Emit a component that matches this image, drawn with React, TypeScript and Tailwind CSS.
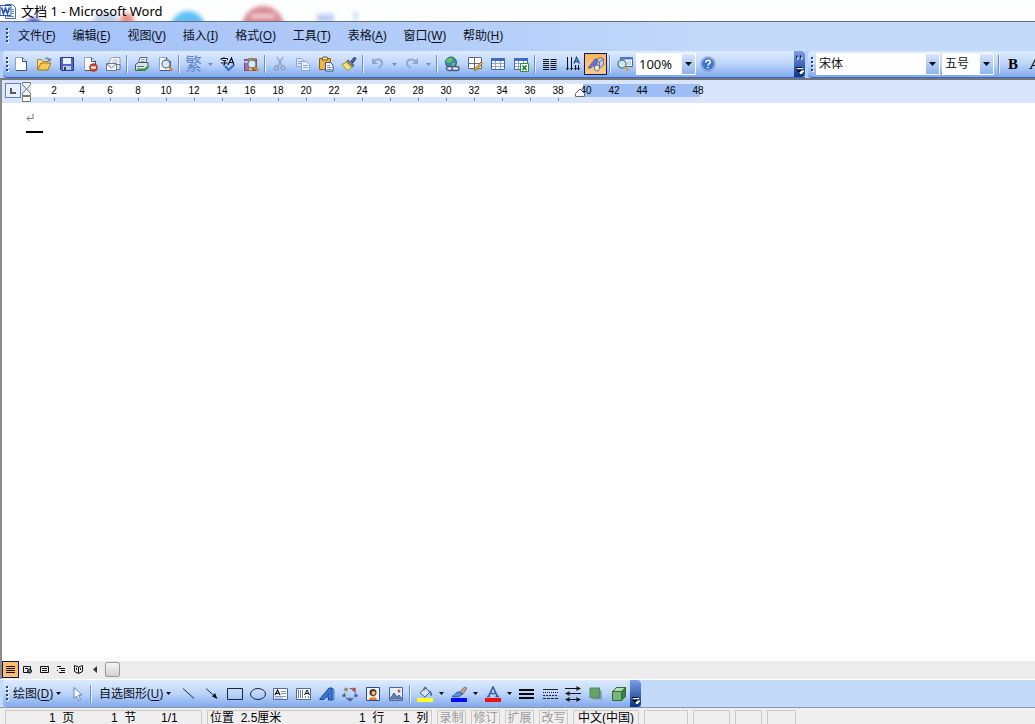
import React from "react";

type Draw = { name: string; art: React.ReactNode; active?: boolean };

const Svg = ({ children, w = 16, h = 16 }: { children: React.ReactNode; w?: number; h?: number }) => (
  <svg width={w} height={h} viewBox={`0 0 ${w} ${h}`} fill="none" aria-hidden="true" className="shrink-0">
    {children}
  </svg>
);

const pageShape = (
  <>
    <path d="M2.500 1.500h7l4 4v9h-11z" fill="#fdfeff" stroke="#8ea3cc" />
    <path d="M9.500 1.500v4h4M13.500 5v9.500H3" stroke="#3f5484" />
  </>
);

const lens = (
  <>
    <circle cx="9" cy="8" r="4" fill="#d5ebf8" stroke="#6b7f92" strokeWidth="1.300" />
    <path d="M12 11l3 3.500" stroke="#c98b2c" strokeWidth="2.600" />
  </>
);

const gridShape = (
  <>
    <path d="M1.500 2.500h13v11h-13z" fill="#fff" stroke="#4067b0" />
    <path d="M1 2h14v3H1z" fill="#3f6cc4" />
    <path d="M2 7.500h12M2 10.500h12M5.500 5v8M10.500 5v8" stroke="#8ba6d6" />
  </>
);

const fileTools: Draw[] = [
  { name: "新建", art: pageShape },
  {
    name: "打开",
    art: (
      <>
        <path d="M1.500 13.500v-10h4l1.500 2h5v2" fill="#f9dc85" stroke="#a8822c" />
        <path d="M1.500 14l3.500-7h10l-3 7z" fill="#fbc94e" stroke="#9d7420" />
        <path d="M9 3c2-2 4-1 4.500 1.500M11.500 3.500l2 1.500 1.500-2.500" stroke="#35559b" />
      </>
    ),
  },
  {
    name: "保存",
    art: (
      <>
        <path d="M1.500 1.500h13v13h-12l-1-1z" fill="#5366c8" stroke="#29328d" />
        <path d="M4 2h8v6H4z" fill="#e9f0ff" />
        <path d="M4 10h8v4H4z" fill="#c5c9dc" />
        <path d="M5 11h2v3H5z" fill="#29328d" />
      </>
    ),
  },
  {
    name: "权限",
    art: (
      <>
        {pageShape}
        <circle cx="11.500" cy="11.500" r="3.800" fill="#d84b2d" stroke="#a42d17" />
        <path d="M9 11.500h5" stroke="#fff" strokeWidth="2" />
      </>
    ),
  },
  {
    name: "电子邮件",
    art: (
      <>
        <path d="M4.500 8c0-5 2-6.500 4-6.500h6.500V12" fill="#fff" stroke="#8b95ac" />
        <path d="M8 4h5M7 6h6" stroke="#a9b6d0" />
        <path d="M1.500 7.500h10v7h-10z" fill="#f3f6fb" stroke="#6c7897" />
        <path d="M2 8l4.500 4L11 8" stroke="#6c7897" />
        <path d="M12 8.500h3v5h-3" fill="#dde5f2" stroke="#6c7897" />
      </>
    ),
  },
];

const printTools: Draw[] = [
  {
    name: "打印",
    art: (
      <>
        <path d="M4 8l2-6.500h7L11.500 8z" fill="#fff" stroke="#5a6785" />
        <path d="M7 3.500h4M6.500 5.500h4" stroke="#91a0be" />
        <path d="M1.500 8.500l3-2h9.500v5l-3 3H1.500z" fill="#dce3e8" stroke="#46545f" />
        <path d="M3 13.500h8l3-3" stroke="#3c9b39" strokeWidth="2" />
        <path d="M3 10.500h7" stroke="#63717c" />
      </>
    ),
  },
  { name: "打印预览", art: <>{pageShape}{lens}</> },
];

const spellTools: Draw[] = [
  {
    name: "拼写和语法",
    art: (
      <>
        <path d="M1 4V2.500h6.500V4M4 1v1M2.500 4.500h3.500L4.500 6v3H3M1 7h6.500" stroke="#111" />
        <path d="M8 9l3.500-7L14 9M9 6.500h4" stroke="#111" strokeWidth="1.200" />
        <path d="M5 10l3.500 4L14 9" stroke="#3a70c2" strokeWidth="2.200" />
      </>
    ),
  },
  {
    name: "信息检索",
    art: (
      <>
        <path d="M1.500 3.500h4v11h-4z" fill="#a96cc0" stroke="#71448b" />
        <path d="M5.500 2.500h4v12h-4z" fill="#edcc61" stroke="#96762a" />
        <path d="M10 3h3.500v11.500H10z" fill="#cf6d55" stroke="#944331" />
        <path d="M1 6h4M6 5h3" stroke="#fff" />
        {lens}
      </>
    ),
  },
];

const clipTools: Draw[] = [
  {
    name: "剪切",
    art: (
      <>
        <path d="M5 1l5 9M11 1L6 10" stroke="#8fa2c4" strokeWidth="1.500" />
        <circle cx="4.500" cy="12" r="2" stroke="#8fa2c4" strokeWidth="1.500" />
        <circle cx="11" cy="12" r="2" stroke="#8fa2c4" strokeWidth="1.500" />
      </>
    ),
  },
  {
    name: "复制",
    art: (
      <>
        <path d="M1.500 2.500h5l3 3v5h-8z" fill="#dbe6f7" stroke="#92a6cb" />
        <path d="M6.500 5.500h5l3 3v6h-8z" fill="#e5eefb" stroke="#92a6cb" />
        <path d="M8 9.500h5M8 11.500h5M3 5.500h3M3 7.500h3" stroke="#92a6cb" />
      </>
    ),
  },
  {
    name: "粘贴",
    art: (
      <>
        <path d="M1.500 2.500h11v11h-11z" fill="#f2b63e" stroke="#8d6114" />
        <path d="M4 4l1-3h4l1 3z" fill="#f5e6a6" stroke="#755d26" />
        <path d="M7.500 6.500h5l2.500 2.500v6H7.500z" fill="#fff" stroke="#384f84" />
        <path d="M9 9.500h3M9 11.500h4.500M9 13.500h4.500" stroke="#6f8cc4" />
      </>
    ),
  },
  {
    name: "格式刷",
    art: (
      <>
        <path d="M10 5l3.500-4 1.500 1.500L12 7z" fill="#50679d" stroke="#2d3f6d" />
        <path d="M7 4l6 5-1.500 2-6-5z" fill="#76839b" stroke="#48546e" />
        <path d="M5.500 6L1 8.500l6 6L11 11z" fill="#f4dc66" stroke="#a98a22" />
        <path d="M3 9l5 4" stroke="#fff6b4" />
      </>
    ),
  },
];

const tableTools: Draw[] = [
  {
    name: "插入超链接",
    art: (
      <>
        <circle cx="7" cy="6.500" r="5.500" fill="#3e82c4" stroke="#285d8d" />
        <path d="M3 3l3-1.500 3 1-1 3-3 1.500-3-1zM7 8l3-2 1.500 2L9 11z" fill="#5fc659" />
        <rect x="2.500" y="10.500" width="7" height="4" rx="2" fill="#d6e2f5" stroke="#47597b" strokeWidth="1.300" />
        <rect x="8" y="10.500" width="7" height="4" rx="2" fill="#d6e2f5" stroke="#47597b" strokeWidth="1.300" />
      </>
    ),
  },
  {
    name: "表格和边框",
    art: (
      <>
        <path d="M1.500 1.500h13v11h-13zM7.500 2v10M2 7.500h12" fill="#fff" stroke="#5c6a86" />
        <path d="M14 6l1.500 1.500-6 6.500-2 .500.500-2z" fill="#eeb84b" stroke="#9b6a22" />
      </>
    ),
  },
  { name: "插入表格", art: gridShape },
  {
    name: "插入 Excel 工作表",
    art: (
      <>
        {gridShape}
        <path d="M7.500 7.500h8v8h-8z" fill="#f2fff0" stroke="#2f8b39" />
        <path d="M9.500 9.500l4 4.500M13.500 9.500l-4 4.500" stroke="#1d7a2b" strokeWidth="1.600" />
      </>
    ),
  },
];

const layoutTools: Draw[] = [
  {
    name: "分栏",
    art: <path d="M1 3.500h6M1 5.500h6M1 7.500h6M1 9.500h6M1 11.500h6M1 13.500h6M8.500 3.500h6M8.500 5.500h6M8.500 7.500h6M8.500 9.500h6M8.500 11.500h6M8.500 13.500h6" stroke="#111" />,
  },
  {
    name: "更改文字方向",
    art: (
      <>
        <path d="M2.500 1v12M6.500 1v12M10.500 9v4M13.500 9v4" stroke="#111" />
        <path d="M1 12l1.500 2.500L4 12zM5 12l1.500 2.500L8 12zM9 12l1.500 2.500L12 12zM12 12l1.500 2.500L15 12z" fill="#111" />
        <path d="M9 7.500l2.500-6 3 6M10 5.500h3.500" stroke="#26508f" strokeWidth="1.400" />
      </>
    ),
  },
  {
    name: "绘图",
    active: true,
    art: (
      <>
        <path d="M8 4.500l4-3 3.500 1.500v6l-4 3-3.500-2z" fill="#c9ccd6" stroke="#68728d" />
        <path d="M8 4.500l3.500 1.500 4-3M11.500 6v6" stroke="#68728d" />
        <path d="M0 12L7 3h2v9H6.500v-2H4.500L3 12zM5.500 8.500h1.500V6.500z" fill="#7679cf" stroke="#4a4fa5" strokeWidth=".800" />
        <ellipse cx="9" cy="12" rx="2.500" ry="3" fill="#e9edf4" stroke="#68728d" />
      </>
    ),
  },
];

const shapeTools: Draw[] = [
  { name: "直线", art: <path d="M2 2.500l11 10" stroke="#1d2633" /> },
  { name: "箭头", art: <><path d="M2 2.500l9 8" stroke="#1d2633" /><path d="M13.500 13l-5.500-2.500 3-3.500z" fill="#111" /></> },
  { name: "矩形", art: <path d="M.500 2.500h15v11H.500z" stroke="#1d2633" /> },
  { name: "椭圆", art: <ellipse cx="8" cy="8" rx="7.500" ry="5.500" stroke="#1d2633" /> },
  {
    name: "文本框",
    art: (
      <>
        <path d="M.500 2.500h14v11H.500z" fill="#f7fbff" stroke="#53699a" />
        <path d="M2 9l2.500-5L7 9M3 7.500h3" stroke="#111" strokeWidth="1.200" />
        <path d="M8 5.500h5M8 7.500h5M2 10.500h11M2 12h8" stroke="#879cbf" />
      </>
    ),
  },
  {
    name: "竖排文本框",
    art: (
      <>
        <path d="M.500 2.500h14v11H.500z" fill="#f7fbff" stroke="#53699a" />
        <path d="M8.500 9l2.500-5 2.500 5M9.500 7.500h3" stroke="#111" />
        <path d="M2.500 4v8M4.500 4v8M6.500 4v8M9.500 10v2M12.500 10v2" stroke="#76849f" />
      </>
    ),
  },
  {
    name: "艺术字",
    art: (
      <>
        <path d="M12.500 2L15 3.500v10.500h-2z" fill="#86b4f0" stroke="#3f74c8" />
        <path d="M.500 13.500L10 2h3v12H9.500v-3H7l-2 2.500zM8.500 9h1V7.500z" fill="#3b78d8" stroke="#1d469c" />
      </>
    ),
  },
  {
    name: "图示",
    art: (
      <>
        <circle cx="8" cy="8" r="5.500" stroke="#35486f" strokeDasharray="3 2" />
        <circle cx="4" cy="3.500" r="2" fill="#a58b6b" />
        <circle cx="12" cy="3.500" r="2" fill="#b3564a" />
        <circle cx="14" cy="9.500" r="1.800" fill="#4f6aa5" />
        <circle cx="8" cy="13.500" r="2" fill="#5b5fae" />
        <circle cx="2" cy="9.500" r="1.800" fill="#4e7a6c" />
      </>
    ),
  },
  {
    name: "插入剪贴画",
    art: (
      <>
        <path d="M1.500 1.500h13v13h-13z" fill="#f1f5fc" stroke="#2d4b87" />
        <path d="M4 14c0-4 8-4 8 0z" fill="#d8752d" />
        <circle cx="8" cy="6.500" r="3.500" fill="#473328" />
        <circle cx="8.500" cy="7" r="2" fill="#f3c27a" />
        <path d="M6 11l3-1 2 2-3 1z" fill="#efb23e" />
      </>
    ),
  },
  {
    name: "插入图片",
    art: (
      <>
        <path d="M1.500 1.500h13v13h-13z" fill="#e2edfb" stroke="#4a6498" />
        <circle cx="11" cy="5" r="1.500" fill="#d6532e" />
        <path d="M2 13l4-6 3 4 2-2 3 4z" fill="#6582bd" stroke="#435b90" />
      </>
    ),
  },
];

const fillArt = (
  <>
    <path d="M3 7l5-5 5 4-5 5z" fill="#dbe4ee" stroke="#4b607f" />
    <path d="M7 5V1.500c1.500-1 2.500 0 2.500 1.500" stroke="#4b607f" />
    <path d="M12 5c2 0 3 2 2.500 5-1-1-1-3-2.500-4z" fill="#417bc2" stroke="#417bc2" />
    <path d="M0 12h16v4H0z" fill="#ffff1f" />
  </>
);
const lineColorArt = (
  <>
    <path d="M8 7l5.500-6L16 2.500 11 9z" fill="#c8a568" stroke="#58719d" />
    <path d="M11 7.500c-1 3.500-5 4-10 3 3-1 4-5 7-4.500z" fill="#5c92dd" stroke="#2c529a" />
    <path d="M0 12h16v4H0z" fill="#0a0af2" />
  </>
);
const fontColorArt = (
  <>
    <path d="M3.500 10.500L8 1l4.500 9.500M5 7.500h6M2 10.500h3M10.500 10.500H14" stroke="#3b5f9e" strokeWidth="1.700" />
    <path d="M0 12h16v4H0z" fill="#ef1010" />
  </>
);

const effectTools: Draw[] = [
  { name: "线型", art: <path d="M0 3.500h15" stroke="#080808" /> && <path d="M0 4h15M0 8h15M0 12h15" stroke="#080808" strokeWidth="2" /> },
  {
    name: "虚线线型",
    art: (
      <>
        <path d="M1 3.500h15" stroke="#222" />
        <path d="M1 6.500h15" stroke="#222" strokeDasharray="1 1" />
        <path d="M1 9.500h15" stroke="#222" strokeDasharray="2 1" />
        <path d="M1 12.500h15" stroke="#222" strokeDasharray="3 1" />
      </>
    ),
  },
  {
    name: "箭头样式",
    art: (
      <>
        <path d="M0 2.500h13M2 7.500h14M2 13.500h12" stroke="#111" />
        <path d="M11 0l5 2.500L11 5l1-2.500zM5 5L0 7.500 5 10 4 7.500zM5 11l-5 2.500L5 16l-1-2.500zM11 11l5 2.500-5 2.500 1-2.500z" fill="#111" />
      </>
    ),
  },
  { name: "阴影样式", art: <><path d="M4.500 4.500h9v9h-9z" fill="#7d8ea6" /><path d="M2 2h9.500v9.500H2z" fill="#62a568" stroke="#4b8d56" /></> },
  {
    name: "三维效果样式",
    art: (
      <>
        <path d="M1.500 5.500l4-4h9v9l-4 4h-9z" fill="#78b978" stroke="#34673c" />
        <path d="M10.500 5.500h-9l4-4h9z" fill="#b3dcae" stroke="#34673c" />
        <path d="M10.500 5.500l4-4v9l-4 4z" fill="#3f7f4c" stroke="#34673c" />
      </>
    ),
  },
];

const Tool = ({ name, art, active }: Draw) => (
  <button
    type="button"
    aria-label={name}
    className={
      active
        ? "flex h-[22px] w-[23px] shrink-0 items-center justify-center border border-[#0b1a66] bg-linear-to-b from-[#fbb45f] to-[#fdc988]"
        : "flex h-[22px] w-[23px] shrink-0 items-center justify-center"
    }
  >
    <Svg>{art}</Svg>
  </button>
);

const Tools = ({ list }: { list: Draw[] }) => (
  <>
    {list.map((t) => (
      <Tool key={t.name} {...t} />
    ))}
  </>
);

const Caret = ({ faded }: { faded?: boolean }) => (
  <svg width="5" height="3" viewBox="0 0 5 3" aria-hidden="true" className="shrink-0">
    <path d="M0 0h5L2.500 3z" fill={faded ? "#7488ad" : "#0a0a14"} />
  </svg>
);

const Drop = ({ name, faded }: { name: string; faded?: boolean }) => (
  <button type="button" aria-label={name} className="flex h-[22px] w-[11px] shrink-0 items-center justify-center">
    <Caret faded={faded} />
  </button>
);

const Sep = () => (
  <div className="flex h-[18px] w-[6px] shrink-0 justify-center">
    <div className="w-px bg-[#6a8ccb]" />
    <div className="w-px bg-[#eaf2ff]" />
  </div>
);

const Grip = () => (
  <svg width="3" height="15" viewBox="0 0 3 15" aria-hidden="true" className="shrink-0">
    {[0, 4, 8, 12].map((y) => (
      <g key={y}>
        <rect x="1" y={y + 1} width="2" height="2" fill="#fff" />
        <rect x="0" y={y} width="2" height="2" fill="#27418d" />
      </g>
    ))}
  </svg>
);

const Combo = ({ label, value, box, face }: { label: string; value: string; box: string; face: string }) => (
  <div className={`relative flex h-[22px] shrink-0 ${box}`}>
    <select aria-label={label} className={`w-full appearance-none bg-white pl-[3px] leading-[20px] text-[#111] outline-none ${face}`}>
      <option>{value}</option>
    </select>
    <span className="pointer-events-none absolute inset-y-px right-px flex w-[13px] items-center justify-center bg-linear-to-b from-[#d7e6fc] to-[#8fb3ec]">
      <svg width="7" height="4" viewBox="0 0 7 4" aria-hidden="true">
        <path d="M0 0h7L3.500 4z" fill="#0a0a14" />
      </svg>
    </span>
  </div>
);

const Overflow = ({ chevrons }: { chevrons?: boolean }) => (
  <button
    type="button"
    aria-label="工具栏选项"
    className="flex w-[11px] shrink-0 items-end justify-center self-stretch rounded-r-sm bg-linear-to-b from-[#7ba0e8] to-[#0b338c] pb-[2px]"
  >
    <svg width="9" height="22" viewBox="0 0 9 22" fill="none" aria-hidden="true">
      {chevrons && (
        <>
          <path d="M2 3l2 2-2 2zM6 3l2 2-2 2z" fill="#fff" />
          <path d="M1 2l2 2-2 2zM5 2l2 2-2 2z" fill="#14255a" />
        </>
      )}
      <path d="M2 15.500h6M3 18h6l-3 3z" fill="#fff" stroke="#fff" />
      <path d="M1 14.500h6" stroke="#0a0a14" />
      <path d="M1 17h6l-3 3z" fill="#0a0a14" />
    </svg>
  </button>
);

const menus = [
  ["文件", "F"], ["编辑", "E"], ["视图", "V"], ["插入", "I"], ["格式", "O"],
  ["工具", "T"], ["表格", "A"], ["窗口", "W"], ["帮助", "H"],
];

const views: { name: string; art: React.ReactNode }[] = [
  { name: "普通视图", art: <path d="M0 1.500h9M0 3.500h9M0 5.500h9M0 7.500h9" stroke="#111" /> },
  { name: "Web 版式视图", art: <><path d="M.500 1.500h7v6h-7zM2 3.500h3" stroke="#111" /><circle cx="6.500" cy="6" r="2" fill="#4d8292" stroke="#111" /></> },
  { name: "页面视图", art: <path d="M.500 1.500h8v6h-8zM2 3.500h5M2 5.500h5" stroke="#111" /> },
  { name: "大纲视图", art: <path d="M0 1.500h4M2 3.500h6M4 5.500h4M2 7.500h6M0 5.500h1" stroke="#111" /> },
  { name: "阅读版式", art: <path d="M.500 .500l4 1.500 4-1.500v6l-4 2-4-2zM4.500 2v6M2.500 3v2M6.500 3v2" stroke="#111" /> },
];

const rulerMarks = Array.from({ length: 24 }, (_, i) => (i + 1) * 2);

const Cell = ({ children, box }: { children?: React.ReactNode; box: string }) => (
  <div className={`flex h-[16px] shrink-0 items-center border border-[#cfcac8] leading-[14px] whitespace-pre ${box}`}>{children}</div>
);

export default function App() {
  return (
    <div className="flex h-screen flex-col overflow-hidden bg-white font-['Noto_Sans','Noto_Sans_CJK_SC',sans-serif] text-[12px] text-[#0b1020]">
      <header className="relative flex h-[22px] shrink-0 items-center gap-[5px] overflow-hidden border-b border-[#65707f] bg-[#fdfefe]">
        <svg width="370" height="21" viewBox="0 0 370 21" aria-hidden="true" className="pointer-events-none absolute bottom-0 left-[20px]">
          <defs>
            <filter id="soft" x="-50%" y="-50%" width="200%" height="200%">
              <feGaussianBlur stdDeviation="2" />
            </filter>
          </defs>
          <g filter="url(#soft)">
            <circle cx="14" cy="26" r="8" fill="#3c47c8" />
            <circle cx="86" cy="26" r="14" fill="#c3d3e6" />
            <circle cx="107" cy="20" r="7" fill="#ea8f88" />
            <circle cx="168" cy="28" r="17" fill="#5fc1f5" />
            <circle cx="243" cy="27" r="21" fill="#d98a94" />
            <path d="M231 16h24" stroke="#f6e3e6" strokeWidth="3" />
            <path d="M297 14h17v8h-17z" fill="#b9cdf3" />
            <path d="M333 12h5v8h-5z" fill="#cfe2f8" />
          </g>
        </svg>
        <svg width="16" height="16" viewBox="0 0 16 16" fill="none" aria-hidden="true" className="relative shrink-0">
          <path d="M5.500 1.500h7l3 3v11h-10z" fill="#fff" stroke="#4a6ba8" />
          <path d="M12 6.500h2M12 8.500h2M12 10.500h2M7 13.500h7" stroke="#5c87d6" />
          <path d="M0 2.500h11v10H0z" fill="#e9f1ff" stroke="#2d53a5" />
          <path d="M1.500 4.500l2 6 2-5 2 5 2-6" stroke="#2450a8" strokeWidth="1.600" />
        </svg>
        <h1 className="relative text-[13px] leading-[20px] text-black">文档 1 - Microsoft Word</h1>
      </header>

      <nav aria-label="菜单栏" className="flex h-[29px] shrink-0 items-center bg-linear-to-r from-[#a2c0f7] via-[#b7d0f9] via-50% to-[#c4dafa] to-70% pb-[2px] pl-[6px]">
        <Grip />
        <div className="ml-[9px] flex gap-[17px]">
          {menus.map(([text, key]) => (
            <button key={key} type="button" className="whitespace-nowrap leading-[20px]">
              {text}(<span className="underline underline-offset-2">{key}</span>)
            </button>
          ))}
        </div>
      </nav>

      <div className="flex h-[27px] shrink-0 overflow-hidden bg-[#b7d0f9] pl-[3px]">
        <div role="toolbar" aria-label="常用" className="flex w-[802px] shrink-0 items-center rounded-l-sm border-b border-[#3d68b8] bg-linear-to-b from-[#deebfe] via-[#bcd5fa] to-[#80a9ec] pl-[3px]">
          <Grip />
          <Tools list={fileTools} />
          <Sep />
          <Tools list={printTools} />
          <Sep />
          <button type="button" className="flex h-[22px] w-[23px] shrink-0 items-center justify-center text-[17px] leading-[20px] text-[#5f87cc]">繁</button>
          <Drop name="中文简繁转换" faded />
          <Tools list={spellTools} />
          <Sep />
          <Tools list={clipTools} />
          <Sep />
          <Tool name="撤消" art={<><path d="M3 6c3-4 9-3 9 1 0 3-2 4-4 5" stroke="#8fa6d0" strokeWidth="1.800" /><path d="M2 2v6h6z" fill="#8fa6d0" /></>} />
          <Drop name="撤消列表" faded />
          <Tool name="恢复" art={<><path d="M12 6C9 2 3 3 3 7c0 3 2 4 4 5" stroke="#8fa6d0" strokeWidth="1.800" /><path d="M14 2v6H8z" fill="#8fa6d0" /></>} />
          <Drop name="恢复列表" faded />
          <Sep />
          <Tools list={tableTools} />
          <Sep />
          <Tools list={layoutTools} />
          <Sep />
          <Tool
            name="文档结构图"
            art={
              <>
                <path d="M3.500 1.500h12v9h-12z" fill="#fff" stroke="#3f68b8" />
                <path d="M3 1h13v2.500H3z" fill="#4876c9" />
                <path d="M10 6h4M10 8h4" stroke="#8ba6d6" />
                <circle cx="5" cy="8" r="4" fill="#cdeaf0" stroke="#5f7690" strokeWidth="1.300" />
                <path d="M8 11l3 3.500" stroke="#c7a23a" strokeWidth="2.400" />
              </>
            }
          />
          <Combo label="显示比例" value="100%" box="w-[60px]" face="text-[13px]" />
          <Tool
            name="帮助"
            art={
              <>
                <circle cx="8" cy="8" r="6.500" fill="#3e74d0" stroke="#e6effc" />
                <circle cx="8" cy="8" r="7" stroke="#4c73bd" strokeWidth=".800" />
                <path d="M5.800 6.500c0-3 4.500-3 4.500-.300 0 1.500-2.200 1.500-2.200 3.300M8 10.800v1.500" stroke="#fff" strokeWidth="1.500" />
              </>
            }
          />
          <div className="flex-1" />
          <Overflow chevrons />
        </div>
        <div role="toolbar" aria-label="格式" className="ml-[3px] flex min-w-0 flex-1 items-center overflow-hidden rounded-l-sm border-b border-[#3d68b8] bg-linear-to-b from-[#deebfe] via-[#bcd5fa] to-[#80a9ec] pl-[3px]">
          <Grip />
          <div className="ml-[2px] flex shrink-0 items-center gap-[2px]">
            <Combo label="字体" value="宋体" box="w-[124px]" face="text-[12px]" />
            <Combo label="字号" value="五号" box="w-[52px]" face="text-[12px]" />
            <Sep />
          </div>
          <button type="button" aria-label="加粗" className="w-[22px] shrink-0 font-['Liberation_Serif',serif] text-[15px] font-black text-black">B</button>
          <button type="button" aria-label="倾斜" className="w-[22px] shrink-0 font-['Liberation_Serif',serif] text-[15px] font-bold text-black italic">A</button>
        </div>
      </div>

      <main className="flex min-h-0 flex-1 flex-col border-t-2 border-l-2 border-t-[#70757e] border-l-[#8a8a8a]">
        <div className="flex h-[23px] shrink-0 bg-[#d8e5fc] pl-[3px]">
          <button type="button" aria-label="制表符" className="mt-[3px] flex h-[15px] w-[16px] shrink-0 items-center justify-center border border-[#5a83cc] bg-[#e7effc]">
            <svg width="7" height="7" viewBox="0 0 7 7" aria-hidden="true">
              <path d="M1 1v5h5" fill="none" stroke="#5a5a5a" strokeWidth="2" />
            </svg>
          </button>
          <svg width="10" height="22" viewBox="0 0 10 22" fill="none" stroke="#777" aria-hidden="true" className="mt-px shrink-0">
            <path d="M1.500 1.500h8v2l-4 4.500-4-4.500zM5.500 8l4 4.500v2h-8v-2zM1.500 15.500h8v5h-8z" fill="#fdfdf6" />
          </svg>
          <div className="flex flex-1 flex-col pt-[4px]">
            <ol className="flex h-[13px] bg-[linear-gradient(90deg,#fff_0,#fff_552px,#9dbdf5_552px,#9dbdf5_669px,transparent_669px)] pl-[9px]">
              {rulerMarks.map((n) => (
                <li key={n} className="w-[28px] shrink-0 text-center font-['Liberation_Sans',sans-serif] text-[10px] leading-[13px] text-black">
                  {n}
                </li>
              ))}
            </ol>
            <div className="flex pl-[9px]">
              {rulerMarks.slice(0, 19).map((n) => (
                <span key={n} className="flex h-[4px] w-[28px] shrink-0 justify-center pt-px">
                  <span className="w-px bg-[#7d8794]" />
                </span>
              ))}
              <svg width="10" height="9" viewBox="0 0 10 9" aria-hidden="true" className="-mt-[9px] ml-[3px]">
                <path d="M.500 8.500v-3L5 1l4.500 4.500v3z" fill="#fff" stroke="#666" />
              </svg>
            </div>
          </div>
        </div>
        <div role="textbox" aria-label="文档内容" className="flex min-h-0 flex-1 flex-col items-start pt-[10px] pl-[24px]">
          <svg width="8" height="9" viewBox="0 0 8 9" fill="none" aria-hidden="true">
            <path d="M7 .500v5H1M3.500 3L1 5.500 3.500 8" stroke="#7c7c7c" />
          </svg>
          <div className="mt-[9px] h-[2px] w-[17px] bg-black" />
        </div>
        <div className="flex h-[18px] shrink-0 items-start bg-[#ececec]">
          {views.map((v, i) => (
            <button
              key={v.name}
              type="button"
              aria-label={v.name}
              className={
                i === 0
                  ? "flex h-[17px] w-[17px] items-center justify-center border border-[#0b1a66] bg-[#fdbd6c]"
                  : "flex h-[17px] w-[17px] items-center justify-center"
              }
            >
              <Svg w={9} h={9}>{v.art}</Svg>
            </button>
          ))}
          <button type="button" aria-label="向左滚动" className="flex h-[17px] w-[16px] items-center justify-center">
            <svg width="4" height="7" viewBox="0 0 4 7" aria-hidden="true">
              <path d="M4 0v7L0 3.500z" fill="#333" />
            </svg>
          </button>
          <div className="mt-px ml-[2px] h-[15px] w-[15px] rounded-xs border border-[#999] bg-linear-to-b from-[#f5f5f5] to-[#d2d2d2]" />
        </div>
      </main>

      <div className="flex h-[29px] shrink-0 border-t border-b border-t-white border-b-[#8a97b0] bg-[#c4daf9] pl-[3px]">
        <div role="toolbar" aria-label="绘图" className="flex shrink-0 items-center rounded-l-sm bg-linear-to-b from-[#deebfe] via-[#bcd5fa] to-[#80a9ec] pl-[3px]">
          <Grip />
          <button type="button" className="ml-[4px] flex w-[52px] shrink-0 items-center gap-[3px] whitespace-nowrap">
            <span>绘图(<span className="underline underline-offset-2">D</span>)</span>
            <Caret />
          </button>
          <Tool name="选择对象" art={<path d="M5 1.500v11l2.500-2.500 2 4.500 2-1-2-4.500H13z" fill="#fff" stroke="#6681b3" />} />
          <Sep />
          <button type="button" className="ml-[5px] flex w-[78px] shrink-0 items-center gap-[3px] whitespace-nowrap">
            <span>自选图形(<span className="underline underline-offset-2">U</span>)</span>
            <Caret />
          </button>
          <Tools list={shapeTools} />
          <Sep />
          <Tool name="填充颜色" art={fillArt} />
          <Drop name="填充颜色列表" />
          <Tool name="线条颜色" art={lineColorArt} />
          <Drop name="线条颜色列表" />
          <Tool name="字体颜色" art={fontColorArt} />
          <Drop name="字体颜色列表" />
          <Tools list={effectTools} />
          <Overflow />
        </div>
      </div>

      <footer className="flex h-[16px] shrink-0 gap-[5px] overflow-hidden bg-[#efefef] pt-[2px] pl-[5px] font-['Liberation_Sans','Noto_Sans_CJK_SC',sans-serif] text-black">
        <Cell box="w-[197px] pl-[43px]">
          <span className="w-[62px]">1  页</span>
          <span className="w-[50px]">1  节</span>
          <span>1/1</span>
        </Cell>
        <Cell box="w-[225px] pl-[2px]">
          <span className="w-[149px]">位置  2.5厘米</span>
          <span className="w-[44px]">1  行</span>
          <span>1  列</span>
        </Cell>
        {["录制", "修订", "扩展", "改写"].map((t) => (
          <Cell key={t} box="w-[29px] justify-center text-[#9b9b9b]">{t}</Cell>
        ))}
        <Cell box="w-[66px] justify-center">中文(中国)</Cell>
        <Cell box="w-[44px]" />
        <Cell box="w-[37px]" />
        <Cell box="w-[27px]" />
        <Cell box="w-[29px]" />
      </footer>
    </div>
  );
}
